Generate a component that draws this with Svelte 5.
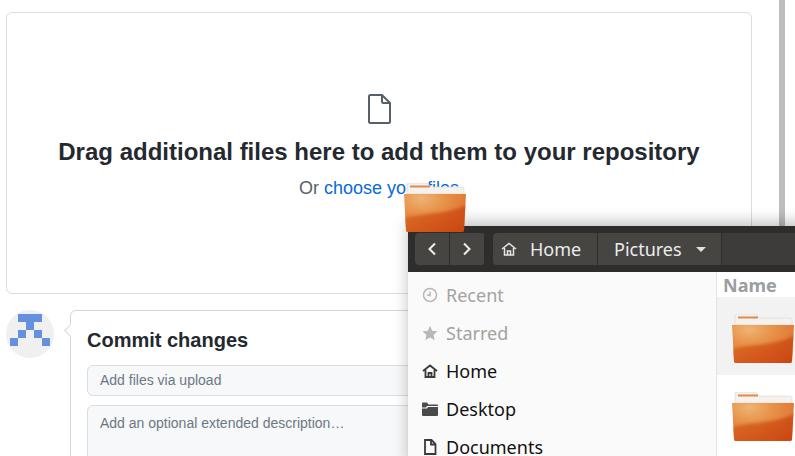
<script>
  const sidebar = [
    { label: 'Recent', icon: 'clock', dim: true },
    { label: 'Starred', icon: 'star', dim: true },
    { label: 'Home', icon: 'home' },
    { label: 'Desktop', icon: 'folder' },
    { label: 'Documents', icon: 'doc' }
  ];
</script>

{#snippet folder()}
  <svg width="62" height="49" viewBox="0 0 62 49" class="folder">
    <defs>
      <radialGradient id="fold" cx="0.28" cy="0.12" r="1">
        <stop offset="0" stop-color="#efb473" />
        <stop offset="0.4" stop-color="#e79048" />
        <stop offset="1" stop-color="#d9692a" />
      </radialGradient>
      <linearGradient id="foldlow" x1="0" y1="0" x2="1" y2="0.6">
        <stop offset="0" stop-color="#dc6c28" />
        <stop offset="1" stop-color="#c9430e" />
      </linearGradient>
      <clipPath id="foldclip">
        <path d="M0 11h62l-2 36q0 2-2 2H4q-2 0-2-2z" />
      </clipPath>
      <filter id="foldblur" x="-20%" y="-20%" width="140%" height="140%">
        <feGaussianBlur stdDeviation="1.600" />
      </filter>
    </defs>
    <path d="M3 11V2q0-2 2-2h17q2 0 3.500 2l1.500 2h31q2 0 2 2v5z" fill="#f4f1ee" stroke="#dcd6d0" stroke-width="0.6" />
    <rect x="6" y="2.500" width="20" height="2" fill="#e08a4c" />
    <path d="M0 11h62l-2 36q0 2-2 2H4q-2 0-2-2z" fill="url(#fold)" />
    <g clip-path="url(#foldclip)">
      <path d="M-4 36C20 29 42 33 66 20V54H-4z" fill="url(#foldlow)" opacity="0.85" filter="url(#foldblur)" />
    </g>
  </svg>
{/snippet}

<div class="page">
  <main class="content">
    <section class="dropzone">
      <svg class="file-icon" width="24" height="30" viewBox="0 0 24 30" fill="none" stroke="#57606a" stroke-width="2">
        <path d="M3.500 1h11.500l8 8v18.500a1.500 1.500 0 0 1-1.500 1.500h-18a1.500 1.500 0 0 1-1.500-1.500v-25a1.500 1.500 0 0 1 1.500-1.500z" />
        <path d="M15 1v6.500a1.500 1.500 0 0 0 1.500 1.500h6.500" />
      </svg>
      <h2>Drag additional files here to add them to your repository</h2>
      <p>Or <span class="link">choose your files</span></p>
    </section>

    <section class="commit">
      <div class="avatar">
        <svg width="48" height="48" viewBox="0 0 48 48" fill="#6590e0" shape-rendering="crispEdges">
          <rect x="12" y="4" width="24" height="8" />
          <rect x="20" y="12" width="8" height="8" />
          <rect x="12" y="20" width="8" height="8" />
          <rect x="28" y="20" width="8" height="8" />
          <rect x="4" y="28" width="8" height="8" />
          <rect x="36" y="28" width="8" height="8" />
        </svg>
      </div>
      <div class="commit-box">
        <h3>Commit changes</h3>
        <div class="field">Add files via upload</div>
        <div class="field area">Add an optional extended description…</div>
      </div>
    </section>
  </main>
  <div class="scrollbar"></div>

  <div class="drag-folder">{@render folder()}</div>

  <div class="dialog">
    <header class="titlebar">
      <div class="nav-buttons">
        <button aria-label="Back">
          <svg width="10" height="14" viewBox="0 0 10 14" fill="none" stroke="#eee" stroke-width="2"><path d="M8 1.500 2.500 7 8 12.500" /></svg>
        </button>
        <button aria-label="Forward">
          <svg width="10" height="14" viewBox="0 0 10 14" fill="none" stroke="#eee" stroke-width="2"><path d="M2 1.500 7.500 7 2 12.500" /></svg>
        </button>
      </div>
      <div class="pathbar">
        <div class="crumb home">
          <svg width="16" height="14" viewBox="0 0 16 14" fill="none" stroke="#e6e6e6" stroke-width="1.500"><path d="M1 7 8 1.500 15 7M3.500 6v7h9V6M6.500 13V9h3v4" /></svg>
          <span>Home</span>
        </div>
        <div class="crumb pictures">
          <span>Pictures</span>
          <i class="caret"></i>
        </div>
        <div class="crumb rest"></div>
      </div>
    </header>
    <div class="body">
      <nav class="sidebar">
        {#each sidebar as item}
          <div class="place" class:dim={item.dim}>
            <span class="place-icon">
              {#if item.icon === 'clock'}
                <svg width="16" height="16" viewBox="0 0 16 16" fill="none" stroke="#b8b8b4" stroke-width="1.500"><circle cx="8" cy="8" r="6.500" /><path d="M8 4.500V8.500L5 8" /></svg>
              {:else if item.icon === 'star'}
                <svg width="16" height="16" viewBox="0 0 16 16" fill="#b8b8b4"><path d="M8 .8l2.200 4.900 5.300.6-3.900 3.600 1.100 5.300L8 12.500l-4.700 2.700 1.100-5.300L.5 6.300l5.300-.6z" /></svg>
              {:else if item.icon === 'home'}
                <svg width="16" height="14" viewBox="0 0 16 14" fill="none" stroke="#3a3a3a" stroke-width="1.800"><path d="M1 7 8 1.500 15 7M3.500 6v7h9V6M6.500 13V9h3v4" /></svg>
              {:else if item.icon === 'folder'}
                <svg width="16" height="14" viewBox="0 0 16 14" fill="#4a4a4a"><path d="M0 1.500q0-1 1-1h4l1.500 2H15q1 0 1 1V4H5L4 5.500H0zM0 6.500h5L6 5h10v8q0 1-1 1H1q-1 0-1-1z" /></svg>
              {:else}
                <svg width="14" height="16" viewBox="0 0 14 16" fill="none" stroke="#3a3a3a" stroke-width="1.800"><path d="M2 1h6.500L12.500 5v10H2zM8 1v4.500h4.500" /></svg>
              {/if}
            </span>
            <span>{item.label}</span>
          </div>
        {/each}
      </nav>
      <div class="files">
        <div class="col-head">Name</div>
        <div class="file-row selected">{@render folder()}</div>
        <div class="file-row">{@render folder()}</div>
      </div>
    </div>
  </div>
</div>

<style>
  :global(body) {
    margin: 0;
    background: #fff;
    overflow: hidden;
  }

  .page {
    position: relative;
    width: 795px;
    height: 456px;
    overflow: hidden;
    display: flex;
    font-family: "Liberation Sans", Arial, sans-serif;
    color: #24292f;
  }

  .content {
    width: 746px;
    margin: 12px 0 0 6px;
    flex-shrink: 0;
  }

  .scrollbar {
    width: 6px;
    height: 226px;
    margin-left: 27px;
    background: #bdbdbd;
  }

  .dropzone {
    height: 282px;
    box-sizing: border-box;
    border: 1px solid #d8dee4;
    border-radius: 6px;
    display: flex;
    flex-direction: column;
    align-items: center;
    padding-top: 81px;
  }

  .file-icon {
    display: block;
  }

  .dropzone h2 {
    margin: 13px 0 0;
    font-size: 24px;
    line-height: 30px;
    font-weight: 700;
  }

  .dropzone p {
    margin: 9px 0 0;
    font-size: 18px;
    line-height: 24px;
    color: #57606a;
  }

  .link {
    color: #0969da;
  }

  .commit {
    display: flex;
    margin-top: 16px;
  }

  .avatar {
    width: 48px;
    height: 48px;
    border-radius: 50%;
    background: #f0f0f0;
    line-height: 0;
  }

  .commit-box {
    position: relative;
    flex: 1;
    height: 200px;
    margin-left: 16px;
    padding: 16px;
    border: 1px solid #d0d7de;
    border-radius: 6px;
  }

  .commit-box::before {
    content: "";
    position: absolute;
    left: -5px;
    top: 15px;
    width: 8px;
    height: 8px;
    background: #fff;
    border-left: 1px solid #d0d7de;
    border-bottom: 1px solid #d0d7de;
    transform: rotate(45deg);
  }

  .commit-box h3 {
    margin: 0 0 11px;
    font-size: 20px;
    line-height: 27px;
    font-weight: 700;
  }

  .field {
    box-sizing: border-box;
    height: 31px;
    padding: 0 12px;
    font-size: 14px;
    line-height: 29px;
    color: #6e7781;
    background: #f6f8fa;
    border: 1px solid #d8dee4;
    border-radius: 6px;
  }

  .field.area {
    height: 120px;
    margin-top: 9px;
    line-height: 34px;
  }

  .drag-folder {
    position: absolute;
    left: 404px;
    top: 183px;
    z-index: 3;
    line-height: 0;
  }

  .dialog {
    position: absolute;
    left: 408px;
    top: 226px;
    width: 400px;
    height: 240px;
    background: #fafafa;
    box-shadow: 0 -4px 14px rgba(0, 0, 0, 0.25);
    font-family: "Noto Sans", "Open Sans", sans-serif;
    z-index: 2;
  }

  .titlebar {
    height: 46px;
    box-sizing: border-box;
    padding: 7px 0 0 7px;
    display: flex;
    gap: 8px;
    background: #2e2d2b;
  }

  .nav-buttons {
    display: flex;
    height: 32px;
    border-radius: 4px;
    overflow: hidden;
  }

  .nav-buttons button {
    width: 35px;
    padding: 0;
    background: #464542;
    border: 0;
    border-right: 1px solid #2e2d2b;
    display: flex;
    align-items: center;
    justify-content: center;
  }

  .pathbar {
    flex: 1;
    display: flex;
    height: 32px;
    color: #ececec;
    font-size: 18px;
    line-height: 32px;
    border-radius: 4px 0 0 4px;
    overflow: hidden;
  }

  .crumb {
    display: flex;
    align-items: center;
    background: #464542;
    border-right: 1px solid #2e2d2b;
    box-sizing: border-box;
  }

  .crumb.home {
    width: 105px;
    padding-left: 8px;
    gap: 13px;
  }

  .crumb.pictures {
    width: 124px;
    padding-left: 16px;
    gap: 14px;
  }

  .crumb.rest {
    flex: 1;
    background: #3d3c3a;
    border-right: 0;
  }

  .caret {
    width: 0;
    height: 0;
    border-left: 5px solid transparent;
    border-right: 5px solid transparent;
    border-top: 5px solid #e0e0e0;
  }

  .body {
    display: flex;
  }

  .sidebar {
    width: 309px;
    box-sizing: border-box;
    padding: 4px 0 0 14px;
    border-right: 1px solid #e4e4e2;
  }

  .place {
    height: 38px;
    display: flex;
    align-items: center;
    gap: 8px;
    font-size: 18px;
    color: #111;
  }

  .place.dim {
    color: #a3a39f;
  }

  .place-icon {
    width: 16px;
    display: flex;
    justify-content: center;
  }

  .files {
    flex: 1;
    background: #fff;
  }

  .col-head {
    height: 25px;
    padding-left: 6px;
    font-size: 18px;
    font-weight: 700;
    line-height: 26px;
    color: #9a9ea2;
  }

  .file-row {
    height: 78px;
    padding: 17px 0 0 15px;
    box-sizing: border-box;
    line-height: 0;
  }

  .file-row.selected {
    background: #f2f2f2;
  }
</style>
